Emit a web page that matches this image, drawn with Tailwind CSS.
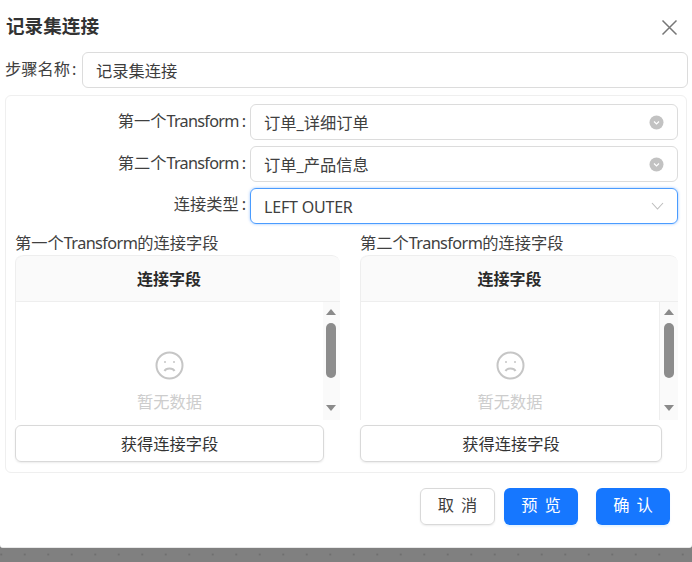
<!DOCTYPE html>
<html><head><meta charset="utf-8"><script src="https://cdn.jsdelivr.net/npm/@tailwindcss/browser@4"></script></head>
<body class="m-0 w-[692px] h-[562px] overflow-hidden bg-[#808080] font-['Noto_Sans','Noto_Sans_CJK_SC',sans-serif] text-[16.25px] text-[#404040]">
<div class="relative h-[548px] bg-white rounded-b-[3px] border-b border-[#e8e8e8]">
  <div class="flex items-center justify-between h-[52px] pl-[6px] pr-[14px]">
    <h1 class="text-[18.6px] font-bold text-[#333] leading-none mb-[-1px]">记录集连接</h1>
    <svg class="w-[17px] h-[17px] mb-[-2px]" viewBox="0 0 17 17" fill="none" stroke="#777" stroke-width="1.5"><path d="M1.500 1.500 15.500 15.500M15.500 1.500 1.500 15.500"/></svg>
  </div>
  <div class="flex items-center pl-[5px] pr-[4px] h-[36px]">
    <span class="w-[77px] whitespace-nowrap mt-[-2px]">步骤名称<span class="ml-[2px]">:</span></span>
    <div class="flex-1 h-[36px] flex items-center pl-[13px] pt-[2px] border border-[#dcdcdc] rounded-[6px] text-[#3c3c3c]">记录集连接</div>
  </div>
  <div class="mt-[7px] mx-[5px] h-[378px] border border-[#efefef] rounded-[6px] pt-[8px] pl-[9px]">
    <div class="flex flex-col gap-[6px] pr-[8px]">
      <div class="flex items-center h-[36px]"><span class="w-[235px] text-right pr-[4px] whitespace-nowrap mt-[-1px]">第一个<span class="tracking-[-0.75px]">Transform</span><span class="ml-[3px]">:</span></span>
        <div class="flex-1 h-[36px] flex items-center justify-between pl-[13px] pr-[13px] border border-[#dcdcdc] rounded-[6px]"><span class="pt-[2px]">订单_详细订单</span>
          <svg class="w-[15px] h-[15px]" viewBox="0 0 15 15"><circle cx="7.500" cy="7.500" r="7" fill="#c2c2c2"/><path d="M5 6.500 7.500 9 10 6.500" fill="none" stroke="#fff" stroke-width="1.2"/></svg></div></div>
      <div class="flex items-center h-[36px]"><span class="w-[235px] text-right pr-[4px] whitespace-nowrap mt-[-1px]">第二个<span class="tracking-[-0.75px]">Transform</span><span class="ml-[3px]">:</span></span>
        <div class="flex-1 h-[36px] flex items-center justify-between pl-[13px] pr-[13px] border border-[#dcdcdc] rounded-[6px]"><span class="pt-[2px]">订单_产品信息</span>
          <svg class="w-[15px] h-[15px]" viewBox="0 0 15 15"><circle cx="7.500" cy="7.500" r="7" fill="#c2c2c2"/><path d="M5 6.500 7.500 9 10 6.500" fill="none" stroke="#fff" stroke-width="1.2"/></svg></div></div>
      <div class="flex items-center h-[36px]"><span class="w-[235px] text-right pr-[4px] whitespace-nowrap mt-[-3px]">连接类型<span class="ml-[3px]">:</span></span>
        <div class="flex-1 h-[36px] flex items-center justify-between pl-[13px] pr-[13px] border border-[#4a9cff] rounded-[6px] shadow-[0_0_3px_rgba(24,119,255,0.45)]"><span class="pt-[2px] text-[16px] tracking-[-0.2px]">LEFT OUTER</span>
          <svg class="w-[13px] h-[8px]" viewBox="0 0 13 8" fill="none" stroke="#bdbdbd" stroke-width="1.1"><path d="M1 1 6.500 7 12 1"/></svg></div></div>
    </div>
    <div class="flex mt-[7px]">
      <div class="w-[325px] shrink-0">
        <div class="h-[24px] leading-[24px] whitespace-nowrap">第一个<span class="tracking-[-0.6px]">Transform</span>的连接字段</div>
        <div class="h-[165px] overflow-hidden rounded-t-[8px] border-l border-[#eee] w-[325px]">
          <div class="h-[47px] bg-[#fafafa] border-b border-[#eee] rounded-t-[8px] border-t flex items-center justify-center font-bold text-[#2a2a2a] pr-[18px] pt-[1px] text-[16px]">连接字段</div>
          <div class="flex h-[118px]">
            <div class="flex-1 flex flex-col items-center pt-[49px]">
              <svg class="w-[29px] h-[29px]" viewBox="0 0 29 29" fill="none" stroke="#c6c6c6" stroke-width="2"><circle cx="14.500" cy="14.500" r="13"/><circle cx="10" cy="11" r="1" fill="#c6c6c6" stroke="none"/><circle cx="19" cy="11" r="1" fill="#c6c6c6" stroke="none"/><path d="M9.500 20c1.500-3.500 8.500-3.500 10 0"/></svg>
              <span class="text-[#cdcdcd] mt-[11px] leading-[22px]">暂无数据</span>
            </div>
            <div class="w-[17px] bg-[#fafafa] relative">
              <span class="absolute left-[3px] top-[7px] w-0 h-0 border-x-[5px] border-x-transparent border-b-[6px] border-b-[#8a8a8a]"></span>
              <span class="absolute left-[3px] top-[21px] w-[10px] h-[55px] rounded-[5px] bg-[#8c8c8c]"></span>
              <span class="absolute left-[3px] top-[103px] w-0 h-0 border-x-[5px] border-x-transparent border-t-[6px] border-t-[#8a8a8a]"></span>
            </div>
          </div>
        </div>
        <div class="mt-[5px] w-[309px] h-[37px] flex items-center justify-center border border-[#d9d9d9] rounded-[6px] shadow-[0_1px_2px_rgba(0,0,0,0.08)] text-[#333] pt-[1px]">获得连接字段</div>
      </div>
      <div class="w-[318px] ml-[20px] shrink-0">
        <div class="h-[24px] leading-[24px] whitespace-nowrap">第二个<span class="tracking-[-0.6px]">Transform</span>的连接字段</div>
        <div class="h-[165px] overflow-hidden rounded-t-[8px] border-l border-[#eee] w-[318px]">
          <div class="h-[47px] bg-[#fafafa] border-b border-[#eee] rounded-t-[8px] border-t flex items-center justify-center font-bold text-[#2a2a2a] pr-[20px] pt-[1px] text-[16px]">连接字段</div>
          <div class="flex h-[118px]">
            <div class="flex-1 flex flex-col items-center pt-[49px]">
              <svg class="w-[29px] h-[29px]" viewBox="0 0 29 29" fill="none" stroke="#c6c6c6" stroke-width="2"><circle cx="14.500" cy="14.500" r="13"/><circle cx="10" cy="11" r="1" fill="#c6c6c6" stroke="none"/><circle cx="19" cy="11" r="1" fill="#c6c6c6" stroke="none"/><path d="M9.500 20c1.500-3.500 8.500-3.500 10 0"/></svg>
              <span class="text-[#cdcdcd] mt-[11px] leading-[22px]">暂无数据</span>
            </div>
            <div class="w-[19px] bg-[#fafafa] border-l border-[#eee] relative">
              <span class="absolute left-[4px] top-[7px] w-0 h-0 border-x-[5px] border-x-transparent border-b-[6px] border-b-[#8a8a8a]"></span>
              <span class="absolute left-[4px] top-[21px] w-[10px] h-[55px] rounded-[5px] bg-[#8c8c8c]"></span>
              <span class="absolute left-[4px] top-[103px] w-0 h-0 border-x-[5px] border-x-transparent border-t-[6px] border-t-[#8a8a8a]"></span>
            </div>
          </div>
        </div>
        <div class="mt-[5px] w-[302px] h-[37px] flex items-center justify-center border border-[#d9d9d9] rounded-[6px] shadow-[0_1px_2px_rgba(0,0,0,0.08)] text-[#333] pt-[1px]">获得连接字段</div>
      </div>
    </div>
  </div>
  <div class="flex justify-end mt-[15px] pr-[22px]">
    <div class="w-[75px] h-[37px] flex items-center justify-center border border-[#d9d9d9] rounded-[6px] shadow-[0_1px_2px_rgba(0,0,0,0.08)] text-[#404040] pb-[2px] [word-spacing:3px]">取 消</div>
    <div class="ml-[9px] w-[74px] h-[37px] flex items-center justify-center rounded-[6px] bg-[#1677ff] text-white shadow-[0_2px_2px_rgba(5,145,255,0.1)] pb-[2px] [word-spacing:3px]">预 览</div>
    <div class="ml-[18px] w-[74px] h-[37px] flex items-center justify-center rounded-[6px] bg-[#1677ff] text-white shadow-[0_2px_2px_rgba(5,145,255,0.1)] pb-[2px] [word-spacing:3px]">确 认</div>
  </div>
</div>
<div class="h-[13px] bg-[radial-gradient(circle,#6f6f6f_1px,transparent_1.2px)] bg-[length:23.5px_13px] bg-[position:-10.5px_0px]"></div>
</body></html>
